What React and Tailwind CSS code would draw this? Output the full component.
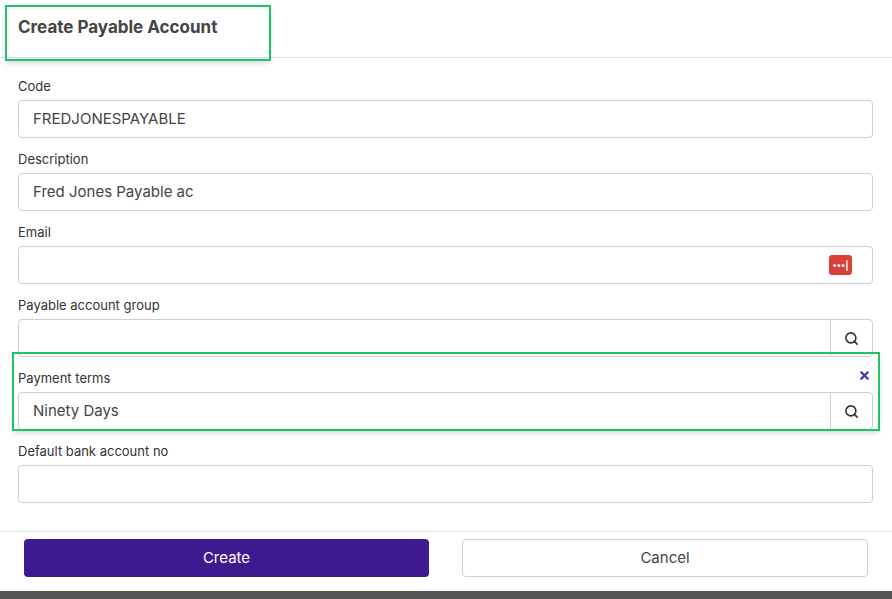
import React from "react";
import { Search, X } from "lucide-react";

function Field({ label, value, children, search }) {
  return (
    <div className="h-[73px]">
      <div className="text-[13px] text-[#333] h-[21px] leading-[15px]">{label}</div>
      <div className="flex h-[38px] border border-[#cfcfcf] rounded-[4px] bg-white">
        <div className="flex-1 flex items-center px-[14px] text-[15px] text-[#444]">{value}</div>
        {children}
        {search && (
          <div className="w-[42px] border-l border-[#cfcfcf] flex items-center justify-center">
            <Search size={15} strokeWidth={2.6} className="text-[#333]" />
          </div>
        )}
      </div>
    </div>
  );
}

function App() {
  return (
    <div className="w-[892px] h-[599px] bg-[#555] flex flex-col" style={{ fontFamily: "Inter, 'Noto Sans', sans-serif" }}>
      <div className="bg-white h-[591px] flex flex-col">
        <div className="relative h-[58px] border-b border-[#e3e3e3] flex items-center px-[18px]">
          <h1 className="text-[17px] font-bold text-[#444] -mt-[1px]">Create Payable Account</h1>
          <div className="absolute left-[5px] top-[5px] w-[266px] h-[56px] border-2 border-[#1ec46a] shadow-md"></div>
        </div>
        <div className="px-[18px] pt-[21px] pr-[19px] flex-1">
          <Field label="Code" value="FREDJONESPAYABLE" />
          <Field label="Description" value="Fred Jones Payable ac" />
          <Field label="Email" value="">
            <div className="flex items-center pr-[20px]">
              <div className="w-[23px] h-[20px] bg-[#d9403a] rounded-[3px] flex items-center justify-center text-white text-[9px] font-bold leading-none">•••|</div>
            </div>
          </Field>
          <Field label="Payable account group" value="" search />
          <div className="relative">
            <Field label="Payment terms" value="Ninety Days" search />
            <X size={13} strokeWidth={4} className="absolute right-[2px] top-[-2px] text-[#4b2bb0]" />
            <div className="absolute left-[-6px] right-[-7px] top-[-19px] h-[79px] border-2 border-[#1ec46a] shadow-md pointer-events-none"></div>
          </div>
          <Field label="Default bank account no" value="" />
        </div>
        <div className="border-t border-[#e3e3e3] h-[60px] flex gap-[33px] px-[24px] pt-[7px] pr-[24px]">
          <button className="w-[405px] h-[38px] bg-[#3d1a8f] text-white text-[15px] rounded-[4px]">Create</button>
          <button className="w-[406px] h-[38px] border border-[#cfcfcf] text-[#444] text-[15px] rounded-[4px] bg-white">Cancel</button>
        </div>
      </div>
    </div>
  );
}

export default App;
